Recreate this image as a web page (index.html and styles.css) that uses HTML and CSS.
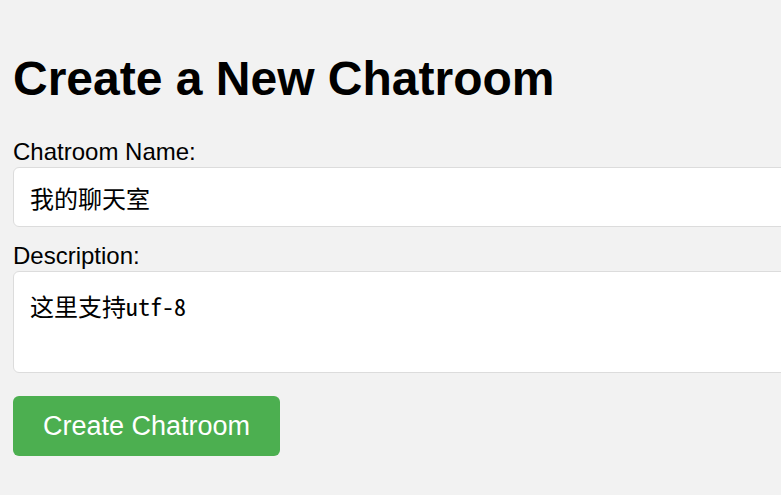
FILE: index.html
```html
<!DOCTYPE html>
<html lang="zh">
<head>
<meta charset="utf-8">
<title>Create a New Chatroom</title>
<link rel="stylesheet" href="styles.css">
</head>
<body>
<h1 class="title">Create a New Chatroom</h1>
<form class="form">
  <label class="label" for="name">Chatroom Name:</label>
  <input class="field" id="name" type="text" value="我的聊天室">
  <label class="label" for="desc">Description:</label>
  <textarea class="field area" id="desc">这里支持utf-8</textarea>
  <button class="btn" type="button">Create Chatroom</button>
</form>
</body>
</html>
```
FILE: styles.css
```css
html {
  overflow: hidden;
}
body {
  margin: 0;
  padding: 12px 13px;
  background: #f2f2f2;
  font-family: "Liberation Sans", Arial, "Noto Sans CJK SC", sans-serif;
  color: #000;
}
.title {
  font-size: 48px;
  font-weight: bold;
  margin: 39px 0 32px;
  line-height: 55px;
}
.form {
  display: block;
}
.label {
  display: block;
  font-size: 24px;
  line-height: 27px;
}
.field {
  display: block;
  width: 100%;
  height: 58px;
  padding: 0 16px;
  border: 1px solid #dcdcdc;
  border-radius: 6px;
  background: #fff;
  font-family: "Liberation Sans", "Noto Sans CJK SC", sans-serif;
  font-size: 24px;
  color: #000;
  margin: 2px 0 15px;
  box-sizing: content-box;
}
.area {
  height: 69px;
  padding: 16px 16px 15px;
  resize: none;
  font-family: "Noto Sans Mono CJK SC", "Noto Sans CJK SC", monospace;
  line-height: 35px;
  margin-bottom: 23px;
}
.btn {
  display: block;
  height: 60px;
  padding: 0 30px;
  border: none;
  border-radius: 6px;
  background: #4caf50;
  color: #fff;
  font-family: "Liberation Sans", Arial, sans-serif;
  font-size: 27px;
}
```
